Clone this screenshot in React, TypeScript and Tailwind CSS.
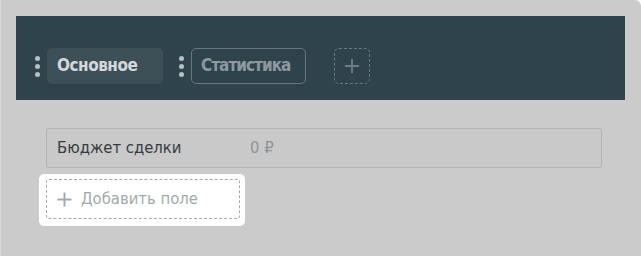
import React from "react";

const Dots: React.FC<{ className?: string }> = ({ className }) => (
  <div className={`flex flex-col gap-[3px] ${className ?? ""}`}>
    <span className="w-[5px] h-[5px] rounded-full bg-[#b9c0c3]" />
    <span className="w-[5px] h-[5px] rounded-full bg-[#b9c0c3]" />
    <span className="w-[5px] h-[5px] rounded-full bg-[#b9c0c3]" />
  </div>
);

const App: React.FC = () => {
  return (
    <div
      className="w-[641px] h-[256px] bg-[#cbcbcb] border-l border-[#d6d6d6] rounded-tr-[6px] pt-4 overflow-hidden"
      style={{ fontFamily: '"DejaVu Sans Condensed", Roboto, sans-serif' }}
    >
      <div className="ml-[15px] w-[609px] h-[84px] bg-[#2f434c] flex items-end pb-4 pl-[19px]">
        <div className="flex items-center h-9">
          <Dots />
          <div className="ml-[7px] w-[116px] h-9 rounded-[5px] bg-[#3d5058] flex items-center pl-[10px] text-[17px] font-bold tracking-[-0.5px] text-[#d3d8da]">
            Основное
          </div>
          <Dots className="ml-[16px]" />
          <div className="ml-[7px] w-[115px] h-9 rounded-[5px] border border-[#68777e] flex items-center pl-[9px] text-[17px] font-bold tracking-[-1px] text-[#8d999e]">
            Статистика
          </div>
          <div className="ml-[28px] w-9 h-9 rounded-[5px] border border-dashed border-[#6b7a81] flex items-center justify-center">
            <svg width="16" height="16" viewBox="0 0 16 16">
              <path d="M8 1v14M1 8h14" stroke="#6f7d83" strokeWidth="1.8" />
            </svg>
          </div>
        </div>
      </div>

      <div className="ml-[45px] mt-[28px] w-[556px]">
        <div className="h-10 rounded-[3px] border border-[#b3b3b3] bg-[#c9c9c9] flex items-center pl-[10px] text-[16.5px]">
          <span className="w-[193px] text-[#363c3f]">Бюджет сделки</span>
          <span className="text-[#8c9396]">0 ₽</span>
        </div>
        <div className="-ml-[7px] mt-[6px] w-[206px] bg-white rounded-[5px] pt-[5px] pl-[7px] pb-[7px]">
          <div className="w-[194px] h-10 rounded-[3px] border border-dashed border-[#a9a9a9] flex items-center pl-[10px] gap-[9px] text-[16.5px] text-[#a3aaad]">
            <svg width="15" height="15" viewBox="0 0 15 15">
              <path d="M7.5 0.5v14M0.5 7.5h14" stroke="#a3aaad" strokeWidth="2" />
            </svg>
            <span>Добавить поле</span>
          </div>
        </div>
      </div>
    </div>
  );
};

export default App;
